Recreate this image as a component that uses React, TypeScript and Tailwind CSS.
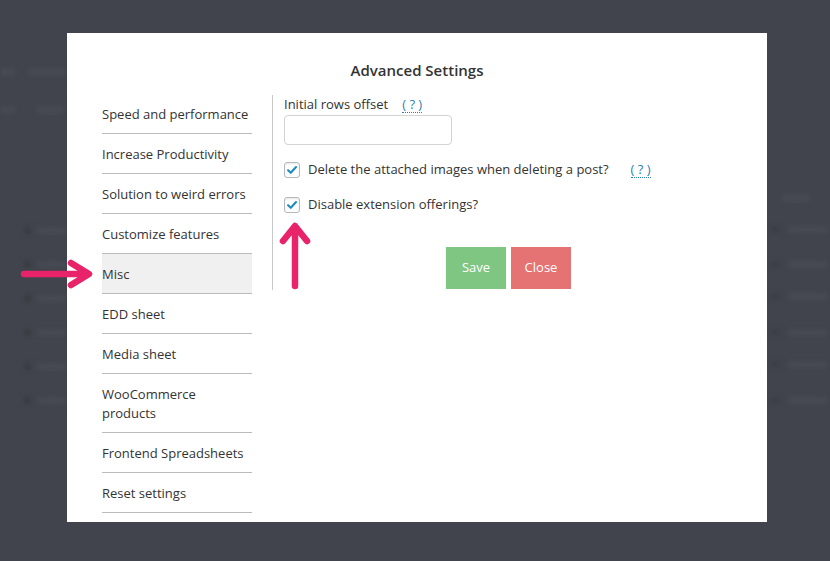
import React from 'react'

const menu = [
  'Speed and performance',
  'Increase Productivity',
  'Solution to weird errors',
  'Customize features',
  'Misc',
  'EDD sheet',
  'Media sheet',
  'WooCommerce products',
  'Frontend Spreadsheets',
  'Reset settings',
]

const Checkbox = () => (
  <span className="flex h-[16px] w-[16px] shrink-0 items-center justify-center rounded-[3px] border border-[#b4b9be] bg-white shadow-[inset_0_1px_2px_rgba(0,0,0,0.1)]">
    <svg viewBox="0 0 16 16" className="h-[14px] w-[14px]">
      <path d="M3.5 8.2 L6.6 11.2 L12.6 4.6" fill="none" stroke="#1e8cbe" strokeWidth={2.4} strokeLinecap="round" strokeLinejoin="round" />
    </svg>
  </span>
)

const Help = () => (
  <span className="ml-[14px] border-b border-dotted border-[#2e7fb3] leading-[15px] text-[#2e7fb3]">( ? )</span>
)

export default function App() {
  return (
    <div
      className="relative h-[561px] w-[830px] overflow-hidden bg-[#41444c]"
      style={{ fontFamily: '"Open Sans", "Noto Sans", sans-serif' }}
    >
      {/* blurred page behind the overlay */}
      <div className="pointer-events-none absolute inset-0 blur-[2px]">
        <div className="absolute left-0 top-[68px] h-[8px] w-[16px] rounded bg-[#474a52]" />
        <div className="absolute left-[28px] top-[68px] h-[8px] w-[38px] rounded bg-[#474a52]" />
        <div className="absolute left-0 top-[106px] h-[8px] w-[16px] rounded bg-[#474a52]" />
        <div className="absolute left-[36px] top-[106px] h-[8px] w-[28px] rounded bg-[#474a52]" />
        {[227, 261, 295, 329, 363, 397].map((t) => (
          <div key={t} className="absolute left-[24px] flex items-center gap-[6px]" style={{ top: t }}>
            <span className="h-[7px] w-[7px] rounded-full bg-[#373a41]" />
            <span className="h-[7px] w-[30px] rounded bg-[#474a52]" />
          </div>
        ))}
        <div className="absolute left-[782px] top-[194px] h-[8px] w-[28px] rounded bg-[#474a52]" />
        {[226, 261, 293, 329, 361, 397].map((t) => (
          <div key={t} className="absolute left-[770px] flex items-center gap-[8px]" style={{ top: t }}>
            <span className="h-[7px] w-[10px] rounded bg-[#3c3f46]" />
            <span className="h-[7px] w-[40px] rounded bg-[#474a52]" />
          </div>
        ))}
      </div>

      {/* modal */}
      <div className="relative ml-[67px] mt-[33px] h-[489px] w-[700px] bg-white pt-[27px] text-[13px] text-[#333]">
        <h1 className="h-[20px] text-center text-[15px] font-semibold leading-[20px] text-[#333]">
          Advanced Settings
        </h1>
        <div className="mt-[14px] flex pl-[35px]">
          <ul className="w-[150px]">
            {menu.map((m) => (
              <li
                key={m}
                className={`flex items-center border-b border-[#bbb] pt-[2px] leading-[19px] ${
                  m === 'WooCommerce products' ? 'h-[59px] pr-[40px]' : 'h-[40px]'
                } ${m === 'Misc' ? 'bg-[#f0f0f0]' : ''}`}
              >
                {m}
              </li>
            ))}
          </ul>
          <div className="ml-[20px] mt-[1px] h-[195px] border-l border-[#c8c8c8] pl-[11px] pt-[1px]">
            <div className="flex h-[18px] items-center">
              Initial rows offset
              <Help />
            </div>
            <input type="text" className="mt-[1px] block h-[30px] w-[168px] rounded-[4px] border border-[#d4d4d4] bg-white" />
            <div className="mt-[16px] flex h-[18px] items-center gap-[8px]">
              <Checkbox />
              <span>Delete the attached images when deleting a post?</span>
              <Help />
            </div>
            <div className="mt-[17px] flex h-[18px] items-center gap-[8px]">
              <Checkbox />
              <span>Disable extension offerings?</span>
            </div>
            <div className="mt-[33px] flex gap-[5px] pl-[162px]">
              <button className="h-[42px] w-[60px] bg-[#7fc683] text-[13px] text-white">Save</button>
              <button className="h-[42px] w-[60px] bg-[#e57373] text-[13px] text-white">Close</button>
            </div>
          </div>
        </div>
      </div>

      {/* annotation arrows */}
      <svg className="pointer-events-none absolute left-0 top-0" width="830" height="561">
        <g fill="none" stroke="#e8236a" strokeWidth={6.5} strokeLinecap="round" strokeLinejoin="round">
          <path d="M24 274 L88 274 M71 263 L89 274 L71 285" />
          <path d="M295 286 L295 227 M283 241 L295 226 L307 241" />
        </g>
      </svg>
    </div>
  )
}
